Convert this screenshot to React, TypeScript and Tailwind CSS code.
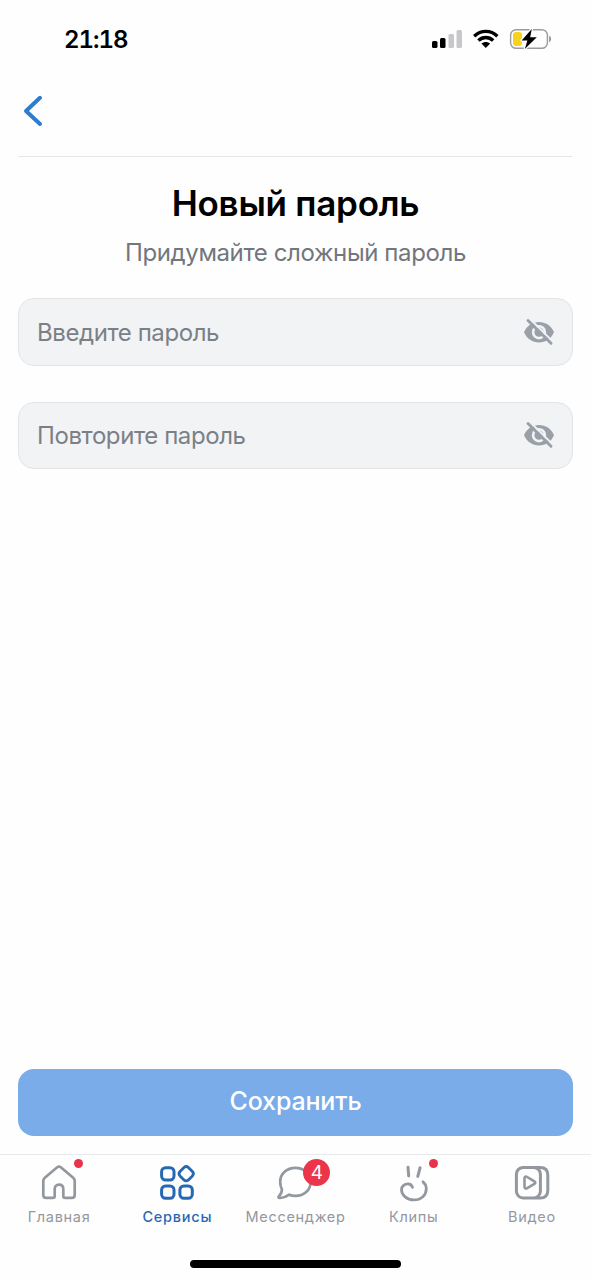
import type { ReactNode } from 'react';
import clsx from 'clsx';

const fields = ['Введите пароль', 'Повторите пароль'];

function StatusIcons() {
  return (
    <svg width="120" height="20" viewBox="0 0 120 20" fill="none">
      <rect x="0" y="12" width="5.5" height="7" rx="1.5" fill="#000" />
      <rect x="8" y="9" width="5.5" height="10" rx="1.5" fill="#000" />
      <rect x="16.5" y="5" width="5.5" height="14" rx="1.5" fill="#c8c8ca" />
      <rect x="24.5" y="1" width="5.5" height="18" rx="1.5" fill="#c8c8ca" />
      <g stroke="#000" strokeWidth="3.4">
        <path d="M42.2 7.2C48.9 0.8 58.7 0.8 65.4 7.2" />
        <path d="M46.4 11.5C50.7 7.5 56.9 7.5 61.2 11.5" />
      </g>
      <path d="M49.4 14.6C51.9 12.3 55.7 12.3 58.2 14.6L53.8 19Z" fill="#000" />
      <rect x="78.6" y="0.7" width="36.8" height="18.6" rx="5.6" stroke="#9b9b9d" strokeWidth="1.4" />
      <rect x="81" y="3" width="9" height="14" rx="3" fill="#f8d21c" />
      <path d="M117.2 6.8C119.6 7.8 119.6 12.2 117.2 13.2Z" fill="#8c8c8e" />
      <path
        d="M99.8 0L89.6 11.4H95.4L92.8 20L104.8 8.3H98.2Z"
        fill="#000"
        stroke="#fff"
        strokeWidth="2.4"
        strokeLinejoin="round"
        paintOrder="stroke"
      />
    </svg>
  );
}

function EyeOffIcon() {
  return (
    <svg width="32" height="28" viewBox="0 0 32 28" fill="none">
      <path d="M1 14.2C4 7.6 9.5 4 16 4S28 7.6 31 14.2C28 20.8 22.5 24.4 16 24.4S4 20.8 1 14.2Z" fill="#99a0a8" />
      <circle cx="16" cy="14.2" r="5.9" stroke="#f2f3f4" strokeWidth="2.6" />
      <path d="M6.7 0.8L31 24.6" stroke="#f2f3f4" strokeWidth="2" />
      <path d="M5 2.5L28 25.3" stroke="#99a0a8" strokeWidth="2.9" strokeLinecap="round" />
    </svg>
  );
}

function TabIcon({ children }: { children: ReactNode }) {
  return (
    <svg
      width="40"
      height="40"
      viewBox="0 0 40 40"
      fill="none"
      stroke="currentColor"
      strokeWidth="3"
      strokeLinecap="round"
      strokeLinejoin="round"
    >
      {children}
    </svg>
  );
}

const tabs = [
  {
    label: 'Главная',
    dot: true,
    icon: (
      <path d="M7.2 34.9C5.3 34.9 4.3 33.9 4.3 32V17.8C4.3 16.5 4.8 15.6 5.8 14.7L18.2 4.3C19.4 3.3 20.6 3.3 21.8 4.3L34.2 14.7C35.2 15.6 35.7 16.5 35.7 17.8V32C35.7 33.9 34.7 34.9 32.8 34.9H26.2C24.9 34.9 24.3 34.3 24.3 33V26.2C24.3 23.3 22.8 21.7 20 21.7S15.7 23.3 15.7 26.2V33C15.7 34.3 15.1 34.9 13.8 34.9Z" strokeWidth="2.7" />
    ),
  },
  {
    label: 'Сервисы',
    active: true,
    icon: (
      <>
        <rect x="4.6" y="4.7" width="12.4" height="12.4" rx="4" />
        <path d="M27 4.5Q29.2 2.5 31.4 4.5L35.4 8.5Q37.4 10.7 35.4 12.9L31.4 16.9Q29.2 18.9 27 16.9L23 12.9Q21 10.7 23 8.5Z" strokeWidth="2.8" />
        <rect x="4.6" y="22.9" width="12.4" height="12.4" rx="4" />
        <rect x="22.9" y="22.9" width="12.4" height="12.4" rx="4" />
      </>
    ),
  },
  {
    label: 'Мессенджер',
    count: 4,
    icon: (
      <path d="M20.4 4.9C29 4.9 35.6 10.6 35.6 18.9S29 32.9 20.4 32.9C18.2 32.9 16.1 32.5 14.2 31.7C11.2 33.9 7.8 35.1 4.7 35C3.3 35 3.1 34 4 33.1C6.2 30.8 7.1 28.6 6.9 26.3C5.8 24.2 5.2 21.6 5.2 18.9C5.2 10.6 11.8 4.9 20.4 4.9Z" strokeWidth="2.7" />
    ),
  },
  {
    label: 'Клипы',
    dot: true,
    icon: (
      <>
        <path d="M14 4.2L14.7 12.9M26.1 4.7L23.8 13.4" />
        <path d="M18.5 24.4C17.8 22.2 16.3 20.9 14 20.9C10.3 20.9 7.5 23.6 7.5 26.6C7.5 32.3 13 36.9 19.8 36.9C27.3 36.9 32.3 32 32.3 25.8C32.3 22.9 31.2 20.6 29 18.8" strokeWidth="2.8" />
      </>
    ),
  },
  {
    label: 'Видео',
    icon: (
      <>
        <rect x="4.4" y="4.4" width="24" height="30.6" rx="6.8" />
        <path d="M23.3 4.4H28.2C33.4 4.4 35.8 7 35.8 12V27.4C35.8 32.4 33.4 35 28.2 35H23.3" />
        <path d="M12.5 15.4C12.5 13.7 13.8 13.1 15.2 14L22.4 18.4C23.6 19.2 23.6 20.1 22.4 20.8L15.2 25.2C13.8 26.1 12.5 25.4 12.5 23.8Z" strokeWidth="2.6" />
      </>
    ),
  },
];

export default function App() {
  return (
    <div className="flex h-[1280px] w-[591px] flex-col overflow-hidden bg-[#fefefe] font-['Inter','Noto_Sans',sans-serif]">
      <div className="flex h-20 shrink-0 items-start justify-between pr-[39px] pl-[64px]">
        <span className="pt-[24px] text-[24px] leading-[32px] font-semibold tracking-[-1px] whitespace-nowrap text-black tabular-nums">21:18</span>
        <div className="pt-[29px]">
          <StatusIcons />
        </div>
      </div>

      <header className="mr-[19px] ml-[18px] h-[77px] shrink-0 border-b border-[#e4e5e7]">
        <button aria-label="Назад" className="mt-[14px] ml-[4px] block">
          <svg width="22" height="34" viewBox="0 0 22 34" fill="none">
            <path d="M18 3.8L4 17L18 30" stroke="#2d7cce" strokeWidth="4" strokeLinecap="round" strokeLinejoin="round" />
          </svg>
        </button>
      </header>

      <main className="flex flex-1 flex-col px-[18px]">
        <h1 className="mt-[24px] text-center text-[35px] leading-[44px] font-semibold tracking-[-0.25px] text-black">Новый пароль</h1>
        <p className="mt-[12px] text-center text-[24px] leading-[32px] tracking-[-0.38px] text-[#72767d]">Придумайте сложный пароль</p>

        <div className="mt-[29px] flex flex-col gap-[36px]">
          {fields.map((placeholder) => (
            <label
              key={placeholder}
              className="flex h-[67.5px] items-center justify-between rounded-[16px] border border-[#e3e4e6] bg-[#f2f3f4] pr-[17px] pl-[18px]"
            >
              <span className="pt-[2px] text-[24px] leading-[32px] tracking-[-0.42px] text-[#7b8087]">{placeholder}</span>
              <EyeOffIcon />
            </label>
          ))}
        </div>

        <button className="mt-auto mb-[18px] h-[67px] rounded-[16px] bg-[#79ace8] pb-[3px] text-[25px] leading-[32px] font-[450] tracking-[-0.15px] text-white">
          Сохранить
        </button>
      </main>

      <nav className="grid h-[86px] shrink-0 grid-cols-5 border-t border-[#e9eaeb]">
        {tabs.map((tab) => (
          <div
            key={tab.label}
            className={clsx('flex flex-col items-center pt-[8px]', tab.active ? 'text-[#2768b2]' : 'text-[#93989e]')}
          >
            <div className="relative h-[40px] w-[40px]">
              <TabIcon>{tab.icon}</TabIcon>
              {tab.dot && <span className="absolute top-[-4px] right-[-4px] size-[9px] rounded-full bg-[#e8334a]" />}
              {tab.count && (
                <span className="absolute top-[-4px] right-[-15px] flex size-[27px] items-center justify-center rounded-full bg-[#eb354a] text-[19px] leading-none text-white">
                  {tab.count}
                </span>
              )}
            </div>
            <span
              className={clsx(
                'mt-[4px] text-[14.5px] leading-[20px] whitespace-nowrap',
                tab.active ? 'font-[450] tracking-[0.75px]' : 'tracking-[0.7px]',
              )}
            >
              {tab.label}
            </span>
          </div>
        ))}
      </nav>

      <div className="flex h-[40px] shrink-0 justify-center pt-[20px]">
        <div className="h-[8px] w-[211px] rounded-full bg-black" />
      </div>
    </div>
  );
}
